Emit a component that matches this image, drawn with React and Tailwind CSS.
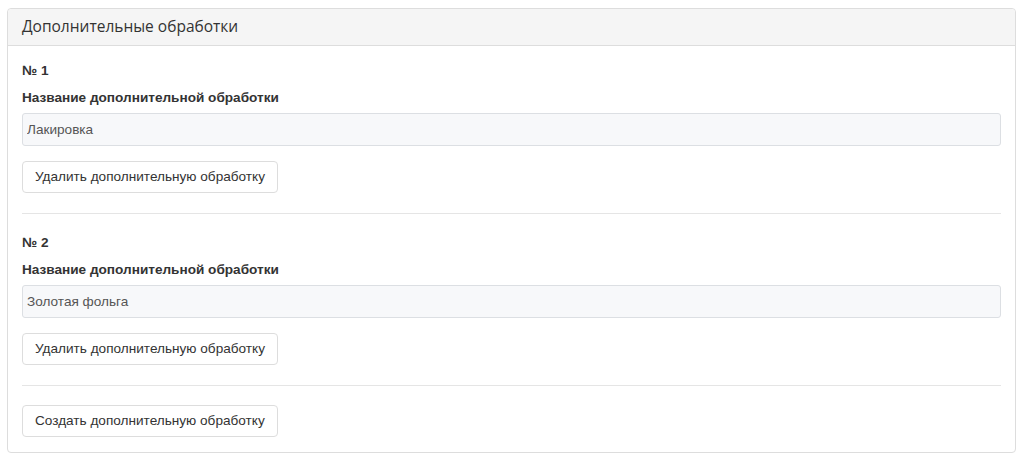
const items = [
  { id: 1, name: "Лакировка" },
  { id: 2, name: "Золотая фольга" },
];

const Button = ({ children }) => (
  <button
    type="button"
    className="h-8 rounded-[4px] border border-[#ddd] bg-white px-3 text-[13.6px] leading-[20px] text-[#333]"
  >
    {children}
  </button>
);

const Treatment = ({ item }) => (
  <div>
    <div className="mb-[7px] text-[13.6px] font-bold leading-[20px] text-[#333]">
      № {item.id}
    </div>
    <label className="mb-[5px] block text-[13.6px] font-bold leading-[20px] text-[#333]">
      Название дополнительной обработки
    </label>
    <input
      readOnly
      value={item.name}
      className="mb-[15px] block h-[33px] w-full rounded-[3px] border border-[#dcdfe3] bg-[#f7f8fa] px-[4px] text-[13.6px] text-[#555] outline-none"
    />
    <Button>Удалить дополнительную обработку</Button>
    <hr className="mb-[19px] mt-[20px] border-t border-[#e5e5e5]" />
  </div>
);

export default function App() {
  return (
    <div
      className="bg-white pb-[6px] pl-[7px] pr-2 pt-2"
      style={{ fontFamily: '"Liberation Sans", Arial, sans-serif' }}
    >
      <div className="rounded-[4px] border border-[#ddd] bg-white">
        <div
          className="flex h-[37px] items-center rounded-t-[4px] border-b border-[#ddd] bg-[#f5f5f5] px-[14px] text-[15.5px] text-[#333]"
          style={{ fontFamily: '"Open Sans", sans-serif' }}
        >
          Дополнительные обработки
        </div>
        <div className="px-[14px] pb-[15px] pt-[15px]">
          {items.map((item) => (
            <Treatment key={item.id} item={item} />
          ))}
          <Button>Создать дополнительную обработку</Button>
        </div>
      </div>
    </div>
  );
}
